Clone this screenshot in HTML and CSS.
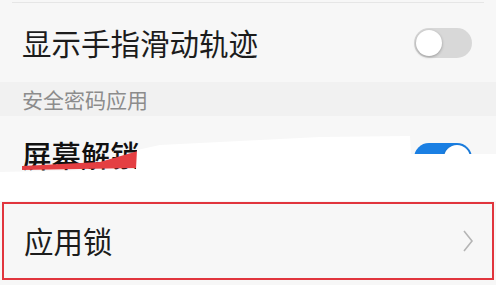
FILE: index.html
```html
<!DOCTYPE html>
<html lang="zh-CN">
<head>
  <meta charset="UTF-8" />
  <meta name="viewport" content="width=device-width, initial-scale=1.0"/>
  <title>安全密码应用</title>
  <link rel="stylesheet" href="styles.css">
</head>
<body>

  <div class="screen">
    <div class="divider"></div>

    <div class="row">
      <span class="row-title">显示手指滑动轨迹</span>
      <div class="switch"><div class="knob"></div></div>
    </div>

    <div class="section">安全密码应用</div>

    <div class="row row-lock">
      <span class="row-title">屏幕解锁</span>
      <div class="switch switch-on"><div class="knob"></div></div>
    </div>

    <div class="row row-app highlight">
      <span class="row-title">应用锁</span>
      <svg class="chevron" viewBox="0 0 12 24">
        <path d="M2 2 L10 12 L2 22"/>
      </svg>
    </div>

    <!-- marker strokes painted over the screenshot -->
    <svg class="marks" viewBox="0 0 496 285">
      <polygon class="mark-red" points="22,166 100,162 138,151 137,168 22,170"/>
      <polygon class="mark-white" points="137,150 160,145 320,137 410,136 411,154 496,154 496,201 0,201 0,172 136,169"/>
    </svg>
  </div>

</body>
</html>
```

FILE: styles.css
```css
* {
  box-sizing: border-box;
}

body {
  margin: 0;
  padding: 0;
  background-color: #f7f7f7;
  font-family: "Noto Sans CJK SC", "Noto Sans", sans-serif;
  color: #1c1c1c;
}

.screen {
  position: relative;
  width: 496px;
  height: 285px;
  overflow: hidden;
  padding-top: 2px;
}

.divider {
  height: 1px;
  margin: 0 12px;
  background-color: #e6e6e6;
}

.row {
  display: flex;
  align-items: center;
  justify-content: space-between;
  height: 79px;
  padding: 0 22px 0 22px;
}

.row-title {
  font-size: 29.5px;
  line-height: 1;
}

.section {
  height: 34px;
  display: flex;
  align-items: center;
  padding-left: 22px;
  background-color: #f1f1f1;
  color: #8c8c8c;
  font-size: 21px;
}

.row-lock {
  height: 78px;
}

.row-lock .row-title {
  color: #111;
  font-weight: 500;
}

.row-app {
  height: 78px;
  margin: 8px 2px 0 2px;
  padding: 0 18px 0 20px;
}

.highlight {
  border: 2px solid #e1353d;
}

.switch {
  width: 58px;
  height: 30px;
  border-radius: 15px;
  background-color: #d8d8d8;
  padding: 2px;
  margin-right: 2px;
}

.knob {
  width: 26px;
  height: 26px;
  border-radius: 50%;
  background-color: #ffffff;
  box-shadow: 0 1px 3px rgba(0, 0, 0, 0.3);
}

.switch-on {
  background-color: #1a7fe3;
  margin-top: 6px;
}

.switch-on .knob {
  margin-left: 28px;
}

.chevron {
  width: 12px;
  height: 24px;
  fill: none;
  stroke: #b5b5b5;
  stroke-width: 1.6;
}

.marks {
  position: absolute;
  top: 0;
  left: 0;
  width: 496px;
  height: 285px;
  pointer-events: none;
}

.mark-red {
  fill: #e43f42;
}

.mark-white {
  fill: #ffffff;
}
```
